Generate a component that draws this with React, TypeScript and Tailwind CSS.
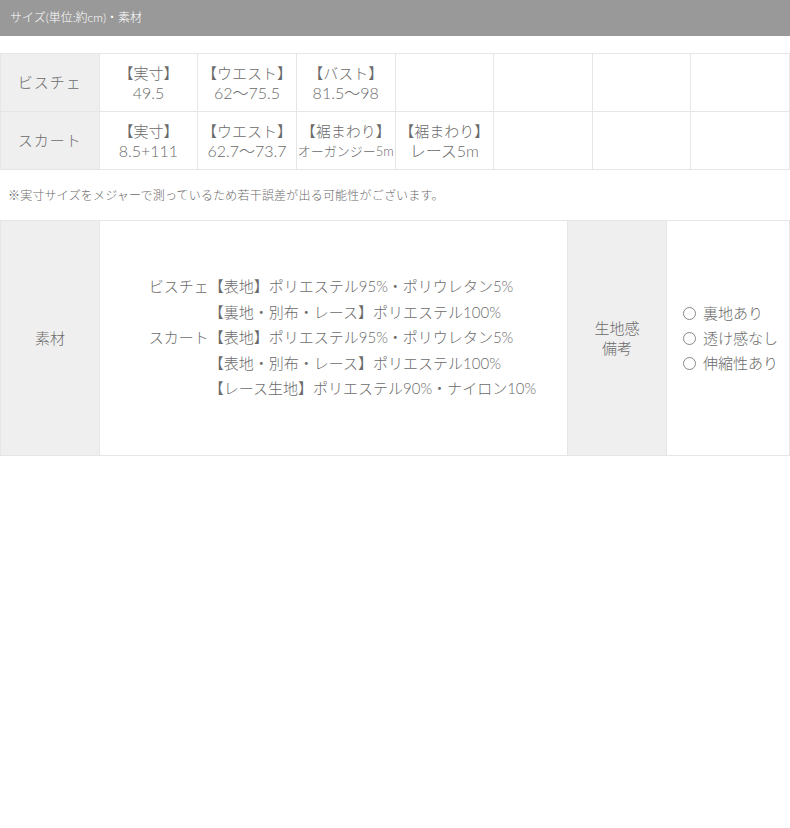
const sizeRows = [
  {
    label: "ビスチェ",
    cells: [
      ["【実寸】", "49.5"],
      ["【ウエスト】", "62～75.5"],
      ["【バスト】", "81.5～98"],
      null,
      null,
      null,
      null,
    ],
  },
  {
    label: "スカート",
    cells: [
      ["【実寸】", "8.5+111"],
      ["【ウエスト】", "62.7～73.7"],
      ["【裾まわり】", "オーガンジー5m", "small"],
      ["【裾まわり】", "レース5m"],
      null,
      null,
      null,
    ],
  },
];

const materials = [
  { name: "ビスチェ", text: "【表地】ポリエステル95%・ポリウレタン5%" },
  { name: "", text: "【裏地・別布・レース】ポリエステル100%" },
  { name: "スカート", text: "【表地】ポリエステル95%・ポリウレタン5%" },
  { name: "", text: "【表地・別布・レース】ポリエステル100%" },
  { name: "", text: "【レース生地】ポリエステル90%・ナイロン10%" },
];

const notes = ["裏地あり", "透け感なし", "伸縮性あり"];

export default function App() {
  return (
    <div
      className="min-h-[828px] w-[790px] bg-white font-light text-[#6b6b6b]"
      style={{ fontFamily: '"Lato", "Noto Sans CJK JP", "Noto Sans", sans-serif' }}
    >
      <div className="flex h-9 items-center bg-[#999999] px-[10px] text-[12px] text-white">
        サイズ(単位:約cm)・素材
      </div>

      <table className="mt-[17px] w-full table-fixed border-collapse">
        <tbody>
          {sizeRows.map((row) => (
            <tr key={row.label} className="h-[58px]">
              <th className="border border-[#e6e6e6] bg-[#efefef] text-[15px] font-light tracking-[1px]">
                {row.label}
              </th>
              {row.cells.map((cell, i) => (
                <td
                  key={i}
                  className="border border-[#e6e6e6] text-center text-[15px] leading-[20px]"
                >
                  {cell && (
                    <>
                      <div>{cell[0]}</div>
                      <div className={cell[2] ? "text-[13px]" : "text-[16px]"}>{cell[1]}</div>
                    </>
                  )}
                </td>
              ))}
            </tr>
          ))}
        </tbody>
      </table>

      <p className="mt-4 px-2 text-[12px] leading-5 tracking-[0.2px]">
        ※実寸サイズをメジャーで測っているため若干誤差が出る可能性がございます。
      </p>

      <table className="mt-[14px] w-full table-fixed border-collapse">
        <tbody>
          <tr className="h-[235px]">
            <th className="w-[99px] border border-[#e6e6e6] bg-[#efefef] text-[15px] font-light">
              素材
            </th>
            <td className="border border-[#e6e6e6] pl-[18px]">
              <div className="flex justify-center">
                <div className="grid grid-cols-[auto_auto] text-[15px] leading-[25.5px]">
                  {materials.map((m, i) => (
                    <div key={i} className="contents">
                      <span>{m.name}</span>
                      <span>{m.text}</span>
                    </div>
                  ))}
                </div>
              </div>
            </td>
            <th className="w-[99px] border border-[#e6e6e6] bg-[#efefef] text-[15px] font-light leading-5">
              生地感
              <br />
              備考
            </th>
            <td className="w-[123px] border border-[#e6e6e6] pl-[16px] text-[15px] leading-[25px]">
              {notes.map((n) => (
                <div key={n} className="flex items-center">
                  <span className="mr-[7px] inline-block size-[13px] rounded-full border border-[#888]" />
                  {n}
                </div>
              ))}
            </td>
          </tr>
        </tbody>
      </table>
    </div>
  );
}
